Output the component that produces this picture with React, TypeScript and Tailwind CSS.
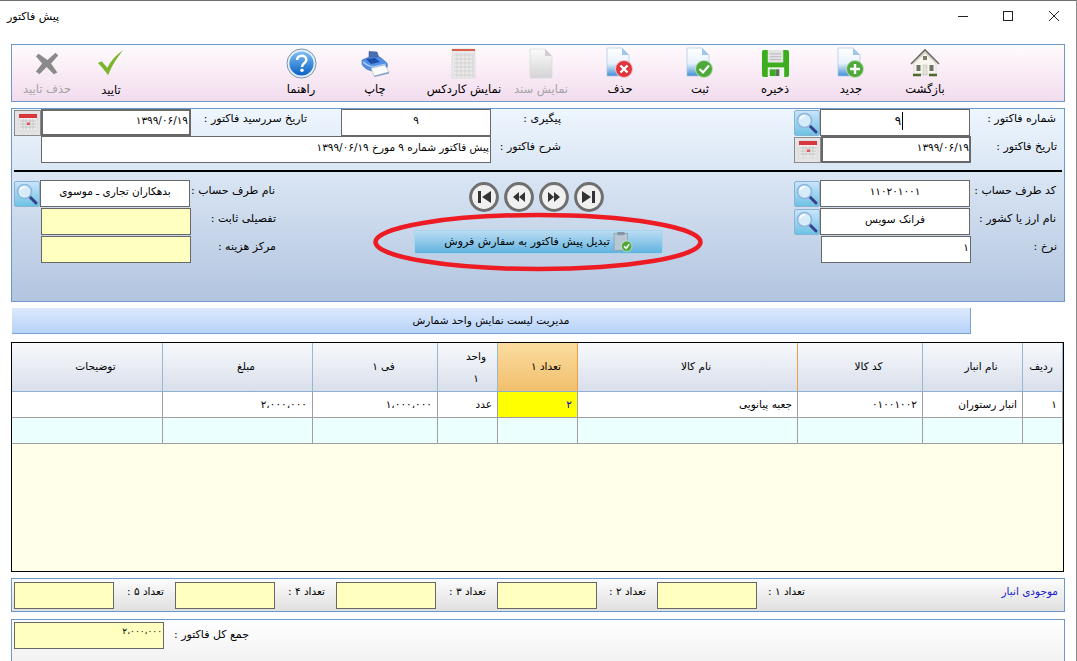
import React from "react";

const DocBase = ({ children }: { children?: React.ReactNode }) => (
  <svg width="34" height="32" viewBox="0 0 34 32">
    <defs>
      <linearGradient id="docg" x1="0" y1="0" x2="0" y2="1">
        <stop offset="0" stopColor="#ffffff" />
        <stop offset="0.55" stopColor="#e8f2fb" />
        <stop offset="1" stopColor="#3f8fd6" />
      </linearGradient>
    </defs>
    <path d="M4 1h15l7 7v21H4z" fill="url(#docg)" stroke="#a9c6e2" strokeWidth="0.7" />
    <path d="M19 1v7h7z" fill="#9fc7ea" />
    {children}
  </svg>
);

const IconX = () => (
  <svg width="25" height="25" viewBox="0 0 28 28">
    <path d="M4 3l10 7 9-8 3 3-8 9 7 10-4 2-8-8-8 8-4-3 7-9-7-8z" fill="#8a8a8a" />
  </svg>
);
const IconCheck = () => (
  <svg width="28" height="28" viewBox="0 0 30 30">
    <path d="M1 15l4-2 6 7C15 12 21 6 28 1c-6 8-12 16-16 27C8 23 5 19 1 15z" fill="#7ab52b" />
  </svg>
);
const IconHelp = () => (
  <svg width="31" height="31" viewBox="0 0 32 32">
    <defs>
      <linearGradient id="hg" x1="0" y1="0" x2="0" y2="1">
        <stop offset="0" stopColor="#7cc0f5" />
        <stop offset="1" stopColor="#0a5fc4" />
      </linearGradient>
    </defs>
    <circle cx="16" cy="16" r="15" fill="#e9eef4" stroke="#6d8fb3" />
    <circle cx="16" cy="16" r="12.5" fill="url(#hg)" />
    <path d="M11.5 12.5c0-6 9.5-6 9.5-.5 0 4-4.5 3.5-4.5 7.5" fill="none" stroke="#fff" strokeWidth="2.6" />
    <circle cx="16.5" cy="23" r="1.8" fill="#fff" />
  </svg>
);
const IconPrinter = () => (
  <svg width="29" height="27" viewBox="0 0 29 27">
    <path d="M8 1.5l8 .5 2 6H8z" fill="#4a6fb5" stroke="#2f4a85" strokeWidth="0.5" />
    <path d="M1 10l7-3h11l7 6c1 3 0 5-1 6l-14 2c-5-1-9-4-10-7z" fill="#4f8fe6" stroke="#3a5f9e" strokeWidth="0.5" />
    <path d="M5 9l9-1 5 4-9 2z" fill="#1f4fa8" />
    <path d="M2 12c3 3 6 4 9 5l14-3" fill="none" stroke="#b6d4f8" strokeWidth="1.2" />
    <path d="M10 18l14-3 4 7-15 4z" fill="#fbfbfb" stroke="#a6adb5" strokeWidth="0.5" />
    <path d="M13 26l15-4v1.5L13.5 27z" fill="#7f9cc8" />
  </svg>
);
const IconSheet = ({ muted }: { muted?: boolean }) => (
  <svg width="26" height="31" viewBox="0 0 26 31">
    <rect x="1" y="1" width="23" height="29" fill="#e9e9e9" stroke="#d2d2d2" strokeWidth="0.6" />
    {!muted && <rect x="1" y="1" width="23" height="2" fill="#d8604a" />}
    {[7, 11, 15, 19, 23, 27].map((y) => (
      <path key={y} d={`M3 ${y}h19`} stroke="#c9c9c9" strokeWidth="0.7" />
    ))}
    {[6, 10, 14, 18, 22].map((x) => (
      <path key={x} d={`M${x} 5v24`} stroke="#d0d0d0" strokeWidth="0.7" />
    ))}
  </svg>
);
const IconBlank = () => (
  <svg width="24" height="31" viewBox="0 0 24 31">
    <defs>
      <linearGradient id="bg" x1="0" y1="0" x2="0" y2="1">
        <stop offset="0" stopColor="#fbfbfb" />
        <stop offset="1" stopColor="#d4d4d4" />
      </linearGradient>
    </defs>
    <path d="M1 1h15l7 7v22H1z" fill="url(#bg)" stroke="#dadada" strokeWidth="0.7" />
    <path d="M16 1v7h7z" fill="#d0d0d0" />
  </svg>
);
const IconDocX = () => (
  <DocBase>
    <circle cx="21" cy="22" r="8.5" fill="#e0333c" stroke="#f3c6c8" strokeWidth="1" />
    <path d="M17.5 18.5l7 7M24.5 18.5l-7 7" stroke="#fff" strokeWidth="2.4" />
  </DocBase>
);
const IconDocCheck = () => (
  <DocBase>
    <circle cx="21" cy="22" r="8.5" fill="#4ea83c" stroke="#bfe0b5" strokeWidth="1" />
    <path d="M16.5 22l3.5 3.5 6-7" fill="none" stroke="#fff" strokeWidth="2.2" />
  </DocBase>
);
const IconDocPlus = () => (
  <DocBase>
    <circle cx="21" cy="22" r="8.5" fill="#4ea83c" stroke="#bfe0b5" strokeWidth="1" />
    <path d="M21 17v10M16 22h10" stroke="#fff" strokeWidth="2.4" />
  </DocBase>
);
const IconFloppy = () => (
  <svg width="29" height="29" viewBox="0 0 30 30">
    <path d="M3 1h24a2 2 0 0 1 2 2v24a2 2 0 0 1-2 2H3a2 2 0 0 1-2-2V3a2 2 0 0 1 2-2z" fill="#3cae1e" />
    <rect x="7" y="1" width="16" height="13" fill="#e4e4e4" />
    <path d="M9 5h12M9 8h12M9 11h12" stroke="#b9b9b9" strokeWidth="1" />
    <rect x="7" y="19" width="17" height="10" fill="#f2f2f2" />
    <rect x="9" y="21" width="6" height="7" fill="#3cae1e" />
    <rect x="15" y="21" width="4" height="7" fill="#5d6f5d" />
  </svg>
);
const IconHouse = () => (
  <svg width="32" height="30" viewBox="0 0 32 30">
    <path d="M5 15L16 5l11 10v11H5z" fill="#f8f6ee" stroke="#c9c4b4" strokeWidth="0.5" />
    <path d="M2 16L16 2l14 14" fill="none" stroke="#66665e" strokeWidth="1.6" />
    <path d="M5 15L16 4.5 27 15" fill="none" stroke="#d8d4c6" strokeWidth="1.4" />
    <rect x="14" y="8" width="4" height="4" fill="#7a7a6a" />
    <rect x="7.5" y="17" width="4" height="6" fill="#6f7468" />
    <rect x="20.5" y="17" width="4" height="6" fill="#6f7468" />
    <rect x="14" y="17" width="4" height="10" fill="#e6e2d4" stroke="#aaa" strokeWidth="0.4" />
    <path d="M4 27h8M20 27h8" stroke="#4c6a2f" strokeWidth="2.4" />
  </svg>
);
const IconLens = () => (
  <svg width="24" height="24" viewBox="0 0 24 24">
    <path d="M14 14l7 7" stroke="#3a3f8a" strokeWidth="3" strokeLinecap="round" />
    <circle cx="9.5" cy="9.5" r="7" fill="#d7ecfb" stroke="#8cb6dc" strokeWidth="1.6" />
    <path d="M5 8a5 5 0 0 1 5-3" fill="none" stroke="#fff" strokeWidth="1.6" />
  </svg>
);
const IconCal = () => (
  <svg width="20" height="20" viewBox="0 0 20 20">
    <rect x="1" y="1" width="18" height="17" fill="#ececec" stroke="#c8c8c8" strokeWidth="0.5" />
    <rect x="1" y="1" width="18" height="4" fill="#d9363e" />
    {[8, 11, 14].map((y) => (
      <path key={y} d={`M2 ${y}h16`} stroke="#b5b5b5" strokeWidth="0.7" />
    ))}
    {[5, 8, 12, 15].map((x) => (
      <path key={x} d={`M${x} 6v11`} stroke="#c0c0c0" strokeWidth="0.7" />
    ))}
    <rect x="9" y="9.5" width="3" height="2.5" fill="#e8505a" />
  </svg>
);
const IconNav = ({ kind }: { kind: "first" | "prev" | "next" | "last" }) => {
  const shapes: Record<string, string> = {
    first: "M9 9h3v12H9zM22 9v12l-9-6z",
    prev: "M15 10v10l-6-5zM21 10v10l-6-5z",
    next: "M9 10v10l6-5zM15 10v10l6-5z",
    last: "M8 9v12l9-6zM18 9h3v12h-3z",
  };
  return (
    <svg width="30" height="30" viewBox="0 0 30 30">
      <circle cx="15" cy="15" r="13.4" fill="#f0f0f0" stroke="#6f6f6f" strokeWidth="3" />
      <path d={shapes[kind]} fill="#333333" />
    </svg>
  );
};
const IconConvert = () => (
  <svg width="20" height="22" viewBox="0 0 19 20">
    <rect x="1" y="2" width="13" height="16" fill="#b8c7d4" stroke="#8696a5" strokeWidth="0.6" />
    <rect x="4" y="0.5" width="7" height="3" fill="#8796a5" />
    <circle cx="13" cy="14" r="5" fill="#4ea83c" stroke="#d5ecd0" strokeWidth="0.7" />
    <path d="M10.5 14l2 2 3-4" fill="none" stroke="#fff" strokeWidth="1.4" />
  </svg>
);
const IconOval = () => (
  <svg width="330" height="60" viewBox="0 0 330 60">
    <ellipse cx="165" cy="30" rx="162.5" ry="27" fill="none" stroke="#ed1c24" strokeWidth="4.5" />
  </svg>
);

const Tool = ({
  w,
  label,
  muted,
  low,
  children,
}: {
  w: string;
  label: string;
  muted?: boolean;
  low?: boolean;
  children: React.ReactNode;
}) => (
  <div className={`${w} flex shrink-0 flex-col items-center`}>
    <div className="flex h-[34px] items-center justify-center">{children}</div>
    <div
      dir="rtl"
      className={`${low ? "mt-[3px]" : "mt-[2px]"} whitespace-nowrap text-[11.5px] leading-[14px] ${muted ? "text-[#a3a3a3]" : "text-black"}`}
    >
      {label}
    </div>
  </div>
);

const Lens = () => (
  <div className="flex h-[26px] w-[26px] shrink-0 items-center justify-center rounded-[2px] border border-[#8ab2d6] bg-gradient-to-b from-[#c9e4f8] to-[#6cc2e4]">
    <IconLens />
  </div>
);
const Cal = ({ w = "w-[26px]" }: { w?: string }) => (
  <div className={`${w} flex h-[26px] shrink-0 items-center justify-center border border-[#8a8a8a] bg-[#e4e4e4]`}>
    <IconCal />
  </div>
);
const Field = ({
  w,
  yellow,
  align = "right",
  thick,
  children,
}: {
  w: string;
  yellow?: boolean;
  align?: "right" | "center";
  thick?: boolean;
  children?: React.ReactNode;
}) => (
  <div
    dir="rtl"
    className={`${w} flex h-[27px] shrink-0 items-center whitespace-nowrap border-[#686868] pb-[4px] text-[10.5px] ${thick ? "border-2" : "border"} ${
      yellow ? "bg-[#ffffc0]" : "bg-white"
    } ${align === "center" ? "justify-center" : "justify-start"}`}
  >
    {children}
  </div>
);
const Label = ({ w, children }: { w: string; children: React.ReactNode }) => (
  <div dir="rtl" className={`${w} shrink-0 whitespace-nowrap pb-[6px] text-[11px] leading-[14px] text-black`}>
    {children}
  </div>
);

const cols = [
  { w: "w-[151px]", head: "توضیحات", val: "" },
  { w: "w-[150px]", head: "مبلغ", val: "۲،۰۰۰،۰۰۰" },
  { w: "w-[125px]", head: "فی ۱", val: "۱،۰۰۰،۰۰۰" },
  { w: "w-[60px]", head: "واحد", val: "عدد" },
  { w: "w-[80px]", head: "تعداد ۱", val: "۲", hot: true },
  { w: "w-[220px]", head: "نام کالا", val: "جعبه پیانویی" },
  { w: "w-[125px]", head: "کد کالا", val: "۰۱۰۰۱۰۰۲" },
  { w: "w-[100px]", head: "نام انبار", val: "انبار رستوران" },
  { w: "flex-1", head: "ردیف", val: "۱" },
];

const Stock = ({ label, lw }: { label: string; lw: string }) => (
  <>
    <Field w="w-[100px]" yellow />
    <div dir="rtl" className={`${lw} shrink-0 whitespace-nowrap pb-[6px] text-[10.5px]`}>
      {label}
    </div>
  </>
);

export default function App() {
  return (
    <div
      className="relative flex h-[661px] w-[1077px] flex-col overflow-hidden border-r border-t border-r-[#8c8c8c] border-t-[#6e6e6e] bg-white text-black"
      style={{ fontFamily: '"DejaVu Sans", Tahoma, sans-serif' }}
    >
      <div className="flex h-[43px] shrink-0 items-start">
        <div dir="rtl" className="ml-[7px] mt-[9px] flex-1 text-left text-[11px] leading-[14px]">
          <span>پیش فاکتور</span>
        </div>
        <svg className="mt-[9px] shrink-0" width="112" height="12" viewBox="0 0 112 12">
          <path d="M0 6.5h10" stroke="#222" />
          <rect x="45.5" y="1.5" width="9" height="9" fill="none" stroke="#222" />
          <path d="M91 1l10 10M101 1l-10 10" stroke="#222" />
        </svg>
        <div className="w-[6px] shrink-0" />
      </div>

      <div className="ml-[11px] flex h-[58px] w-[1054px] shrink-0 items-start border border-[#6f97cc] bg-gradient-to-b from-[#fffbfd] to-[#f2dcee] pt-[1px]">
        <div className="w-[3px] shrink-0" />
        <Tool w="w-[64px]" label="حذف تایید" muted><IconX /></Tool>
        <Tool w="w-[64px]" label="تایید" low><IconCheck /></Tool>
        <div className="w-[120px] shrink-0" />
        <Tool w="w-[76px]" label="راهنما"><IconHelp /></Tool>
        <Tool w="w-[72px]" label="چاپ"><IconPrinter /></Tool>
        <Tool w="w-[106px]" label="نمایش کاردکس"><IconSheet /></Tool>
        <Tool w="w-[48px]" label="نمایش سند" muted><IconBlank /></Tool>
        <Tool w="w-[110px]" label="حذف"><IconDocX /></Tool>
        <Tool w="w-[50px]" label="ثبت"><IconDocCheck /></Tool>
        <Tool w="w-[100px]" label="ذخیره"><IconFloppy /></Tool>
        <Tool w="w-[52px]" label="جدید"><IconDocPlus /></Tool>
        <Tool w="w-[96px]" label="بازگشت"><IconHouse /></Tool>
      </div>

      <div className="ml-[11px] mt-[6px] flex h-[194px] w-[1054px] shrink-0 flex-col border border-[#6f97cc] bg-gradient-to-b from-[#eef6fe] to-[#b2c5df] pl-[2px]">
        <div className="flex h-[27px] items-center">
          <Cal w="w-[27px]" />
          <Field w="w-[150px]" thick><span className="mr-[1px]">۱۳۹۹/۰۶/۱۹</span></Field>
          <div className="w-[8px] shrink-0" />
          <Label w="w-[108px] mb-[2px]">تاریخ سررسید فاکتور :</Label>
          <div className="w-[34px] shrink-0" />
          <Field w="w-[150px]" align="center">۹</Field>
          <div className="w-[34px] shrink-0" />
          <Label w="w-[36px] mb-[2px]">پیگیری :</Label>
          <div className="w-[233px] shrink-0" />
          <Lens />
          <Field w="w-[150px]" align="center">
            <span className="ml-[8px] border-r border-black pr-[1px] text-[12px] leading-[18px]">۹</span>
          </Field>
          <div className="w-[15px] shrink-0" />
          <Label w="w-[71px] mb-[2px]">شماره فاکتور :</Label>
        </div>
        <div className="flex h-[27px] items-center">
          <div className="w-[27px] shrink-0" />
          <Field w="w-[450px]"><span className="mr-[1px]">پیش فاکتور شماره ۹ مورخ ۱۳۹۹/۰۶/۱۹</span></Field>
          <div className="w-[10px] shrink-0" />
          <Label w="w-[60px]">شرح فاکتور :</Label>
          <div className="w-[233px] shrink-0" />
          <Cal w="w-[27px]" />
          <Field w="w-[150px]" thick>۱۳۹۹/۰۶/۱۹</Field>
          <div className="w-[15px] shrink-0" />
          <Label w="w-[71px]">تاریخ فاکتور :</Label>
        </div>

        <div className="mr-[2px] mt-[7px] h-[2px] shrink-0 bg-black" />

        <div className="mt-[8px] flex">
          <div className="flex w-[363px] shrink-0 flex-col gap-[1px]">
            <div className="flex items-center">
              <Lens />
              <Field w="w-[150px]" align="center">بدهکاران تجاری ـ موسوی</Field>
              <div className="w-[9px] shrink-0" />
              <Label w="w-[76px]">نام طرف حساب :</Label>
            </div>
            <div className="flex items-center">
              <div className="w-[27px] shrink-0" />
              <Field w="w-[150px]" yellow />
              <div className="w-[21px] shrink-0" />
              <Label w="w-[64px]">تفصیلی ثابت :</Label>
            </div>
            <div className="flex items-center">
              <div className="w-[27px] shrink-0" />
              <Field w="w-[150px]" yellow />
              <div className="w-[29px] shrink-0" />
              <Label w="w-[56px]">مرکز هزینه :</Label>
            </div>
          </div>

          <div className="flex w-[417px] shrink-0 flex-col">
            <div className="ml-[92px] mt-[2px] flex gap-[5px]">
              <IconNav kind="first" />
              <IconNav kind="prev" />
              <IconNav kind="next" />
              <IconNav kind="last" />
            </div>
            <div className="ml-[37px] mt-[18px] flex h-[24px] w-[249px] items-center justify-center gap-[3px] rounded-[2px] border border-[#a9d4ea] bg-gradient-to-b from-[#b9dcf3] to-[#5fb3de] text-[11px]">
              <span dir="rtl" className="whitespace-nowrap">تبدیل پیش فاکتور به سفارش فروش</span>
              <IconConvert />
            </div>
          </div>

          <div className="flex flex-col gap-[1px]">
            <div className="flex items-center">
              <Lens />
              <Field w="w-[150px]" align="center">۱۱۰۲۰۱۰۰۱</Field>
              <div className="w-[15px] shrink-0" />
              <Label w="w-[71px]">کد طرف حساب :</Label>
            </div>
            <div className="flex items-center">
              <Lens />
              <Field w="w-[150px]" align="center">فرانک سویس</Field>
              <div className="w-[15px] shrink-0" />
              <Label w="w-[71px]">نام ارز یا کشور :</Label>
            </div>
            <div className="flex items-center">
              <div className="w-[27px] shrink-0" />
              <Field w="w-[150px]"><span className="mr-[1px]">۱</span></Field>
              <div className="w-[15px] shrink-0" />
              <Label w="w-[71px]">نرخ :</Label>
            </div>
          </div>
        </div>
      </div>

      <div className="ml-[12px] mt-[6px] flex h-[26px] w-[959px] shrink-0 items-center justify-center border-b border-r border-[#7a9fd0] bg-gradient-to-b from-[#dde9fc] to-[#b6d3f9] text-[10.5px]">
        <span dir="rtl">مدیریت لیست نمایش واحد شمارش</span>
      </div>

      <div className="ml-[11px] mt-[8px] flex h-[230px] w-[1053px] shrink-0 flex-col border border-black bg-[#ffffea]">
        <div className="flex h-[49px] shrink-0 border-b border-[#8fb0d0]">
          {cols.map((c) => (
            <div
              key={c.head}
              dir="rtl"
              className={`${c.w} flex shrink-0 items-center justify-center border-r text-center text-[10.5px] ${
                c.hot
                  ? "border-[#f0a040] bg-gradient-to-b from-[#fbdc9f] to-[#f1bf6c]"
                  : "border-[#9ab6d0] bg-gradient-to-b from-[#f7f9fc] to-[#d9dfeb]"
              } ${c.head === "ردیف" ? "pr-[3px]" : "pl-[17px]"} ${c.head === "نام کالا" ? "border-r-[#f0a040]" : ""}`}
            >
              {c.head === "واحد" ? (
                <span className="leading-[22px]">
                  واحد
                  <br />۱
                </span>
              ) : (
                c.head
              )}
            </div>
          ))}
        </div>
        <div className="flex h-[26px] shrink-0 border-b border-[#a0a0a0] bg-white">
          {cols.map((c) => (
            <div
              key={c.head}
              dir="rtl"
              className={`${c.w} flex shrink-0 items-center justify-start whitespace-nowrap border-r border-[#a0a0a0] pr-[5px] text-[10.5px] ${
                c.hot ? "bg-[#ffff00] text-[#0000c8]" : ""
              }`}
            >
              {c.val}
            </div>
          ))}
        </div>
        <div className="flex h-[26px] shrink-0 border-b border-[#a0a0a0] bg-[#ecffff]">
          {cols.map((c) => (
            <div key={c.head} className={`${c.w} shrink-0 border-r border-[#a0a0a0]`} />
          ))}
        </div>
      </div>

      <div className="ml-[11px] mt-[6px] flex h-[34px] w-[1054px] shrink-0 items-center border border-[#6f97cc] bg-gradient-to-b from-[#fcfcfc] to-[#e0e0e0] pl-[2px]">
        <Stock label="تعداد ۵ :" lw="w-[61px] pr-[11px]" />
        <Stock label="تعداد ۴ :" lw="w-[61px] pr-[11px]" />
        <Stock label="تعداد ۳ :" lw="w-[61px] pr-[11px]" />
        <Stock label="تعداد ۲ :" lw="w-[60px] pr-[11px]" />
        <Stock label="تعداد ۱ :" lw="w-[48px]" />
        <div dir="rtl" className="flex-1 whitespace-nowrap pb-[6px] pr-[6px] text-[10.5px] text-[#1a1ad0]">
          موجودی انبار
        </div>
      </div>

      <div className="ml-[11px] mt-[7px] flex h-[50px] w-[1054px] shrink-0 items-start border border-[#6f97cc] bg-gradient-to-b from-[#ffffff] to-[#f0f0f0] pl-[2px] pt-[2px]">
        <div dir="rtl" className="flex h-[27px] w-[150px] shrink-0 justify-start border border-[#686868] bg-[#ffffc0] pr-[1px] text-[9px] leading-[16px]">
          ۲،۰۰۰،۰۰۰
        </div>
        <div dir="rtl" className="ml-[9px] mt-[6px] w-[76px] whitespace-nowrap text-[11px] leading-[14px]">
          جمع کل فاکتور :
        </div>
      </div>

      <div className="pointer-events-none absolute left-[373px] top-[211px]">
        <IconOval />
      </div>
    </div>
  );
}
